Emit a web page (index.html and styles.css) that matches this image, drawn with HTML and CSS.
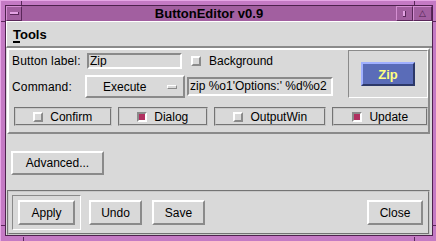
FILE: index.html
```html
<!DOCTYPE html>
<html lang="en">
<head>
  <meta charset="UTF-8" />
  <title>ButtonEditor v0.9</title>
  <link rel="stylesheet" href="styles.css">
</head>
<body>

  <div class="window">
    <!-- resize handle notches on the frame -->
    <span class="notch n-top-l"></span>
    <span class="notch n-top-r"></span>
    <span class="notch n-bot-l"></span>
    <span class="notch n-bot-r"></span>
    <span class="notch n-left-t"></span>
    <span class="notch n-left-b"></span>
    <span class="notch n-right-t"></span>
    <span class="notch n-right-b"></span>

    <div class="frame">
      <div class="titlebar">
        <span class="tb-btn tb-menu"><i></i></span>
        <span class="title">ButtonEditor v0.9</span>
        <span class="tb-btn tb-min"><i></i></span>
        <span class="tb-btn tb-max">&#9651;</span>
      </div>

      <div class="client">
        <div class="menubar">
          <span class="menu"><u>T</u>ools</span>
        </div>

        <div class="editor">
          <div class="top">
            <div class="fields">
              <div class="row">
                <span class="label label-wide">Button label:</span>
                <div class="entry entry-label">Zip</div>
                <span class="check"><span class="ind"></span>Background</span>
              </div>
              <div class="row">
                <span class="label">Command:</span>
                <div class="optmenu">Execute<span class="opt-ind"></span></div>
                <div class="entry entry-cmd">zip %o1'Options:' %d%o2</div>
              </div>
            </div>
            <div class="preview">
              <div class="zip-btn">Zip</div>
            </div>
          </div>

          <div class="toggles">
            <span class="toggle t-confirm"><span class="ind"></span>Confirm</span>
            <span class="toggle t-dialog"><span class="ind on"></span>Dialog</span>
            <span class="toggle t-output"><span class="ind"></span>OutputWin</span>
            <span class="toggle t-update"><span class="ind on"></span>Update</span>
          </div>
        </div>

        <div class="advanced">
          <span class="btn btn-adv">Advanced...</span>
        </div>

        <div class="actions">
          <div class="default-ring">
            <span class="btn btn-apply">Apply</span>
          </div>
          <span class="btn btn-undo">Undo</span>
          <span class="btn btn-save">Save</span>
          <span class="btn btn-close">Close</span>
        </div>
      </div>
    </div>
  </div>

</body>
</html>
```

FILE: styles.css
```css
* {
  margin: 0;
  padding: 0;
  box-sizing: border-box;
}

body {
  width: 436px;
  height: 241px;
  overflow: hidden;
  font-family: 'Liberation Sans', Arial, sans-serif;
  font-size: 12px;
  color: #000;
  background: #c47ac4;
}

/* window manager frame */
.window {
  position: relative;
  width: 436px;
  height: 241px;
  padding: 4px 3px 5px 4px;
  background: #c47ac4;
  border-top: 1px solid #e6a6e6;
  border-left: 1px solid #e6a6e6;
}

.notch {
  position: absolute;
  background: #5a275a;
}

.n-top-l, .n-top-r, .n-bot-l, .n-bot-r {
  width: 1px;
  height: 4px;
}

.n-left-t, .n-left-b, .n-right-t, .n-right-b {
  width: 4px;
  height: 1px;
}

.n-top-l { left: 20px; top: 0; }
.n-top-r { left: 413px; top: 0; }
.n-bot-l { left: 22px; bottom: 0; }
.n-bot-r { left: 413px; bottom: 0; }
.n-left-t { left: 0; top: 20px; }
.n-left-b { left: 0; top: 224px; }
.n-right-t { right: 0; top: 20px; }
.n-right-b { right: 0; top: 224px; }

.frame {
  width: 100%;
  height: 100%;
  display: flex;
  flex-direction: column;
  border: 1px solid #4e214e;
}

.titlebar {
  height: 16px;
  display: flex;
  align-items: stretch;
  background: #a25fa0;
}

.title {
  flex: 1;
  text-align: center;
  font-weight: bold;
  font-size: 13px;
  line-height: 15px;
  color: #000;
}

.tb-btn {
  display: flex;
  align-items: center;
  justify-content: center;
  background: #a25fa0;
  border-top: 1px solid #d48fd2;
  border-left: 1px solid #d48fd2;
  border-right: 1px solid #5a275a;
  border-bottom: 1px solid #5a275a;
}

.tb-menu {
  width: 16px;
}

.tb-menu i {
  display: block;
  width: 9px;
  height: 3px;
  background: #e3a3e3;
  border-bottom: 1px solid #5a275a;
  border-right: 1px solid #5a275a;
}

.tb-min {
  width: 17px;
}

.tb-min i {
  display: block;
  width: 3px;
  height: 6px;
  background: #e3a3e3;
  border-right: 1px solid #5a275a;
  border-bottom: 1px solid #5a275a;
}

.tb-max {
  width: 19px;
  font-size: 9px;
  color: #4e214e;
  line-height: 1;
}

/* application area */
.client {
  flex: 1;
  display: flex;
  flex-direction: column;
  background: #d9d9d9;
}

.menubar {
  height: 27px;
  padding: 5px 0 0 6px;
  border-top: 1px solid #fff;
  border-left: 1px solid #fff;
  border-bottom: 2px solid #8a8a8a;
  font-weight: bold;
  font-size: 13px;
}

.menu u {
  text-decoration-thickness: 2px;
  text-underline-offset: 2px;
}

.editor {
  height: 86px;
  margin: 0 2px 0 1px;
  padding: 0 0 6px 3px;
  border: 2px solid;
  border-color: #fff #8a8a8a #8a8a8a #fff;
}

.top {
  display: flex;
  justify-content: space-between;
}

.fields {
  padding-top: 3px;
  display: flex;
  flex-direction: column;
  gap: 6px;
}

.row {
  display: flex;
  align-items: center;
}

.label {
  width: 73px;
  letter-spacing: 0.15px;
}

.label-wide {
  width: 75px;
}

.entry {
  border: 2px solid;
  border-color: #8a8a8a #fff #fff #8a8a8a;
  padding-left: 1px;
  white-space: nowrap;
  overflow: hidden;
}

.entry-label {
  width: 95px;
  height: 16px;
  line-height: 12px;
}

.entry-cmd {
  width: 146px;
  height: 19px;
  line-height: 15px;
  margin-left: 2px;
}

.check {
  display: flex;
  align-items: center;
  margin-left: 9px;
}

.check .ind {
  margin-right: 8px;
}

.ind {
  display: inline-block;
  width: 10px;
  height: 10px;
  background: #d9d9d9;
  border: 2px solid;
  border-color: #fff #8a8a8a #8a8a8a #fff;
}

.ind.on {
  background: #b03060;
  border-color: #8a8a8a #fff #fff #8a8a8a;
}

.optmenu {
  width: 100px;
  height: 23px;
  display: flex;
  align-items: center;
  padding-left: 16px;
  border: 2px solid;
  border-color: #fff #8a8a8a #8a8a8a #fff;
}

.opt-ind {
  width: 10px;
  height: 4px;
  margin-left: auto;
  margin-right: 6px;
  background: #d9d9d9;
  border: 1px solid;
  border-color: #fff #8a8a8a #8a8a8a #fff;
}

.preview {
  width: 80px;
  height: 48px;
  display: flex;
  align-items: center;
  justify-content: center;
  border: 1px solid;
  border-color: #8a8a8a #fff #fff #8a8a8a;
}

.zip-btn {
  width: 54px;
  height: 24px;
  display: flex;
  align-items: center;
  justify-content: center;
  background: #5a6cb8;
  color: #ffff80;
  font-weight: bold;
  font-size: 13px;
  border: 2px solid;
  border-color: #a0b0ff #2c3868 #2c3868 #a0b0ff;
}

.toggles {
  display: flex;
  gap: 6px;
  margin: 9px 0 0 2px;
}

.toggle {
  height: 19px;
  display: flex;
  align-items: center;
  justify-content: center;
  gap: 7px;
  border: 2px groove #c8c8c8;
}

.t-confirm { width: 98px; }
.t-dialog { width: 91px; }
.t-output { width: 113px; }
.t-update { width: 96px; }

.advanced {
  height: 56px;
  padding: 17px 0 0 5px;
}

.btn {
  display: flex;
  align-items: center;
  justify-content: center;
  height: 25px;
  border: 2px solid;
  border-color: #fff #8a8a8a #8a8a8a #fff;
  background: #d9d9d9;
}

.btn-adv {
  width: 93px;
  height: 24px;
}

.actions {
  height: 45px;
  display: flex;
  align-items: center;
  margin: 0 2px 0 1px;
  padding: 0 5px 0 3px;
  border: 2px groove #c8c8c8;
}

.default-ring {
  padding: 4px 5px;
  border: 1px solid;
  border-color: #8a8a8a #fff #fff #8a8a8a;
}

.btn-apply { width: 57px; }
.btn-undo { width: 53px; margin-left: 8px; }
.btn-save { width: 53px; margin-left: 10px; }
.btn-close { width: 56px; margin-left: auto; }
```
